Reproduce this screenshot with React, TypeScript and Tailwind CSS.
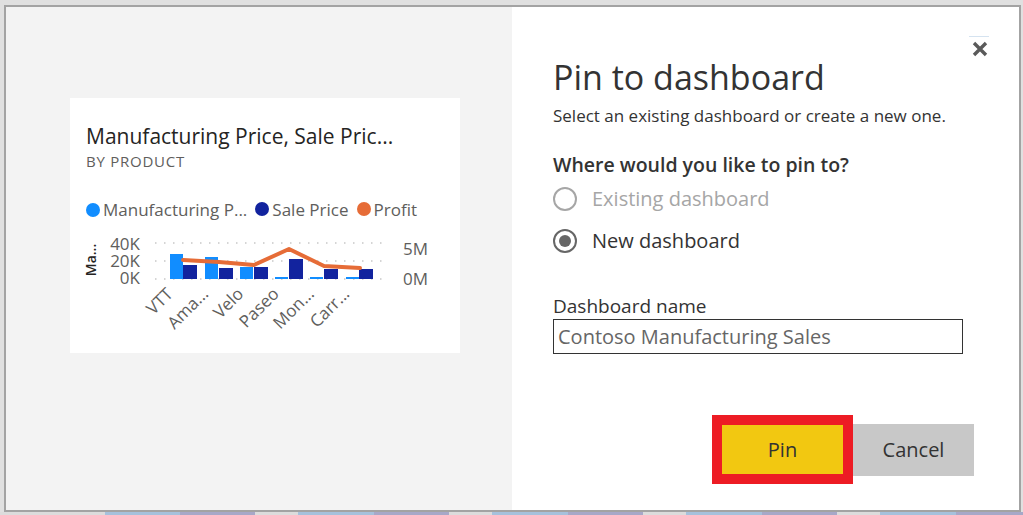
import React from "react";

const FONT = { fontFamily: '"Open Sans", "Noto Sans", sans-serif' };

function Chart() {
  const light = "#118dff";
  const dark = "#12239e";
  const bars = [
    { l: [100, 25], d: [113, 36] },
    { l: [135, 28], d: [149, 39] },
    { l: [170, 38], d: [184, 38] },
    { l: [205, 48], d: [219, 30] },
    { l: [240, 48], d: [254, 40] },
    { l: [276, 48], d: [289, 40] },
  ];
  const labels = ["VTT", "Ama...", "Velo", "Paseo", "Mon...", "Carr..."];
  const line = "113,31 149,33 184,36 219,20 254,37 290,39";
  const grid = [14, 32, 50];
  return (
    <svg width="390" height="120" viewBox="0 0 390 120" className="block">
      {grid.map((y) => (
        <line key={y} x1="85" x2="318" y1={y} y2={y} stroke="#c8c8c8" strokeWidth="1.5" strokeDasharray="1.5 7.5" />
      ))}
      {bars.map((b, i) => (
        <g key={i}>
          <rect x={b.l[0]} y={b.l[1]} width="13" height={50 - b.l[1]} fill={light} />
          <rect x={b.d[0]} y={b.d[1]} width="14" height={50 - b.d[1]} fill={dark} />
        </g>
      ))}
      <polyline points={line} fill="none" stroke="#e66c37" strokeWidth="4" strokeLinejoin="round" strokeLinecap="round" />
      <g fill="#605e5c" fontSize="17" style={FONT}>
        <text x="70" y="21" textAnchor="end">40K</text>
        <text x="70" y="38" textAnchor="end">20K</text>
        <text x="70" y="55" textAnchor="end">0K</text>
        <text x="333" y="26" textAnchor="start">5M</text>
        <text x="333" y="56" textAnchor="start">0M</text>
        {labels.map((t, i) => {
          const x = 104 + i * 35.3;
          const y = 66;
          return (
            <text key={t} x={x} y={y} textAnchor="end" transform={`rotate(-45 ${x} ${y})`}>
              {t}
            </text>
          );
        })}
      </g>
      <text x="26" y="31" textAnchor="middle" transform="rotate(-90 26 31)" fill="#252423" fontSize="14" fontWeight="600" style={FONT}>
        Ma...
      </text>
    </svg>
  );
}

function LegendDot({ color }: { color: string }) {
  return <span className="inline-block w-[14px] h-[14px] rounded-full shrink-0" style={{ backgroundColor: color }} />;
}

export default function App() {
  return (
    <div className="w-[1023px] h-[515px] bg-[#e0e0e0] overflow-hidden flex flex-col" style={FONT}>
      <div className="flex pt-[5px] pl-[4px] h-[512px]">
        <div className="flex w-[1017px] h-[507px] border-2 border-[#a3a3a3]">
          {/* Left preview panel */}
          <div className="w-[506px] h-full bg-[#f3f3f3] pl-[64px] pt-[91px]">
            <div className="w-[390px] h-[255px] bg-white pl-[16px] pt-[24px]">
              <div className="text-[21px] leading-[28px] text-[#252423] whitespace-nowrap">
                Manufacturing Price, Sale Pric...
              </div>
              <div className="text-[15px] leading-[18px] tracking-[0.05em] text-[#605e5c] mt-[2px]">
                BY PRODUCT
              </div>
              <div className="flex items-center mt-[30px] text-[17px] leading-[20px] text-[#605e5c] whitespace-nowrap">
                <LegendDot color="#118dff" />
                <span className="ml-[3px]">Manufacturing P...</span>
                <span className="ml-[8px]"><LegendDot color="#12239e" /></span>
                <span className="ml-[3px]">Sale Price</span>
                <span className="ml-[8px]"><LegendDot color="#e66c37" /></span>
                <span className="ml-[3px]">Profit</span>
              </div>
              <div className="-ml-[16px] mt-[9px]">
                <Chart />
              </div>
            </div>
          </div>
          {/* Right form panel */}
          <div className="relative flex-1 h-full bg-white pl-[41px] pr-[45px] flex flex-col">
            <div className="absolute right-[30px] top-[29px] w-[20px] border-t border-[#d5e3f0]" />
            <button className="absolute right-[30px] top-[33px] w-[18px] h-[18px] flex items-center justify-center">
              <svg width="16" height="16" viewBox="0 0 16 16">
                <path d="M2 2 L14 14 M14 2 L2 14" stroke="#5a5a5a" strokeWidth="3.4" strokeLinecap="butt" />
              </svg>
            </button>
            <h1 className="mt-[48px] text-[34px] leading-[44px] text-[#333333] font-normal whitespace-nowrap">
              Pin to dashboard
            </h1>
            <p className="mt-[7px] text-[17px] leading-[20px] text-[#333333] whitespace-nowrap">
              Select an existing dashboard or create a new one.
            </p>
            <p className="mt-[27px] text-[19.5px] leading-[24px] font-semibold text-[#333333] whitespace-nowrap">
              Where would you like to pin to?
            </p>
            <div className="mt-[7px] flex items-center h-[30px]">
              <span className="w-[24px] h-[24px] rounded-full border-2 border-[#a6a6a6] bg-white" />
              <span className="ml-[15px] text-[20px] text-[#a6a6a6]">Existing dashboard</span>
            </div>
            <div className="mt-[12px] flex items-center h-[30px]">
              <span className="w-[24px] h-[24px] rounded-full border-2 border-[#666666] bg-white flex items-center justify-center">
                <span className="w-[12px] h-[12px] rounded-full bg-[#666666]" />
              </span>
              <span className="ml-[15px] text-[20px] text-[#333333]">New dashboard</span>
            </div>
            <label className="mt-[39px] text-[19px] leading-[22px] text-[#333333] whitespace-nowrap">Dashboard name</label>
            <div className="mt-[2px] w-[410px] h-[35px] border-[1.5px] border-[#333333] flex items-center pl-[4px] text-[20px] text-[#666666] whitespace-nowrap">
              Contoso Manufacturing Sales
            </div>
            <div className="mt-[61px] flex items-center justify-end">
              <div className="border-[10px] border-[#ed1c24]">
                <div className="w-[121px] h-[49px] bg-[#f2c811] flex items-center justify-center text-[20px] text-[#333333]">
                  Pin
                </div>
              </div>
              <div className="w-[121px] h-[52px] bg-[#c8c8c8] flex items-center justify-center text-[20px] text-[#333333]">
                Cancel
              </div>
            </div>
          </div>
        </div>
      </div>
      <div className="flex h-[3px]">
        <div className="w-[105px] bg-[#dcdcdc]" />
        <div className="w-[75px] bg-[#a6c1dc]" />
        <div className="w-[75px] bg-[#a7a8c8]" />
        <div className="w-[43px] bg-[#dcdcdc]" />
        <div className="w-[76px] bg-[#a6c1dc]" />
        <div className="w-[75px] bg-[#a7a8c8]" />
        <div className="w-[43px] bg-[#dcdcdc]" />
        <div className="w-[76px] bg-[#a6c1dc]" />
        <div className="w-[75px] bg-[#a7a8c8]" />
        <div className="w-[43px] bg-[#dcdcdc]" />
        <div className="w-[76px] bg-[#a6c1dc]" />
        <div className="w-[75px] bg-[#a7a8c8]" />
        <div className="w-[43px] bg-[#dcdcdc]" />
        <div className="w-[76px] bg-[#a6c1dc]" />
        <div className="flex-1 bg-[#a7a8c8]" />
      </div>
    </div>
  );
}
